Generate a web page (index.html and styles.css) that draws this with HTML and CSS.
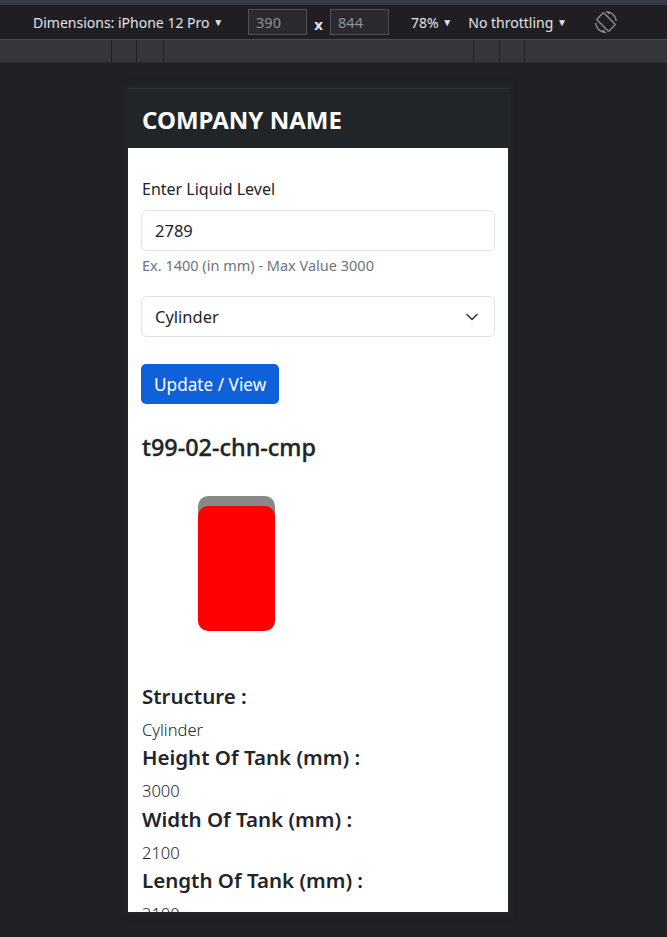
FILE: index.html
```html
<!DOCTYPE html>
<html lang="en">
<head>
<meta charset="utf-8">
<title>Tank Level</title>
<link rel="stylesheet" href="styles.css">
</head>
<body>
<div class="top-strip"></div>
<div class="toolbar">
  <span class="tb-item tb-dim">Dimensions: iPhone 12 Pro <span class="caret">&#9660;</span></span>
  <span class="tb-box">390</span>
  <span class="tb-x">x</span>
  <span class="tb-box">844</span>
  <span class="tb-item tb-zoom">78% <span class="caret">&#9660;</span></span>
  <span class="tb-item tb-throttle">No throttling <span class="caret">&#9660;</span></span>
  <svg class="tb-rotate" width="22" height="22" viewBox="0 0 24 24" aria-hidden="true">
    <path fill="#8a8d93" d="M16.48 2.52c3.27 1.55 5.61 4.72 5.97 8.48h1.5C23.44 4.84 18.29 0 12 0l-.66.03 3.81 3.81 1.33-1.32zm-6.25-.77c-.59-.59-1.54-.59-2.120 0L1.75 8.11c-.59.59-.59 1.54 0 2.12l12.02 12.020c.59.59 1.54.59 2.12 0l6.36-6.36c.59-.59.59-1.54 0-2.12L10.23 1.75zm4.6 19.44L2.81 9.170l6.36-6.36 12.02 12.02-6.36 6.36zm-7.31.29C4.25 19.94 1.91 16.76 1.55 13H.05C.56 19.16 5.71 24 12 24l.66-.03-3.81-3.81-1.33 1.32z"/>
  </svg>
</div>
<div class="ruler">
  <span class="seg s1"></span><span class="seg s2"></span><span class="seg s3"></span><span class="seg s4"></span><span class="seg s5"></span><span class="seg s6"></span><span class="seg s7"></span>
</div>

<main class="device">
  <header class="navbar">COMPANY NAME</header>
  <section class="content">
    <label class="form-label" for="level">Enter Liquid Level</label>
    <div class="form-control" id="level">2789</div>
    <div class="form-text">Ex. 1400 (in mm) - Max Value 3000</div>
    <div class="form-select">
      <span>Cylinder</span>
      <svg class="chev" width="12" height="8" viewBox="0 0 12 8" aria-hidden="true"><path d="M1 1.5 L6 6.5 L11 1.5" fill="none" stroke="#343a40" stroke-width="1.6" stroke-linecap="round" stroke-linejoin="round"/></svg>
    </div>
    <button class="btn">Update / View</button>
    <h2 class="tank-name">t99-02-chn-cmp</h2>
    <div class="tank-wrap">
      <div class="tank"><div class="liquid" style="height:125px"></div></div>
    </div>
    <dl class="specs">
      <dt>Structure :</dt>
      <dd>Cylinder</dd>
      <dt>Height Of Tank (mm) :</dt>
      <dd>3000</dd>
      <dt>Width Of Tank (mm) :</dt>
      <dd>2100</dd>
      <dt>Length Of Tank (mm) :</dt>
      <dd>2100</dd>
    </dl>
  </section>
</main>
</body>
</html>
```

FILE: styles.css
```css
html, body {
  margin: 0;
  padding: 0;
}
body {
  background: #202124;
  font-family: "Noto Sans", "Open Sans", sans-serif;
  height: 937px;
  overflow: hidden;
}
.top-strip {
  height: 5px;
  background: #373946;
}
.toolbar {
  height: 34px;
  background: #1f1f23;
  border-bottom: 1px solid #4a4b50;
  display: flex;
  align-items: center;
  color: #e3e3e6;
  font-size: 14px;
  font-family: "Noto Sans", sans-serif;
}
.caret {
  font-size: 10px;
  position: relative;
  top: -2px;
}
.tb-dim { margin-left: 33px; }
.tb-box {
  box-sizing: border-box;
  width: 59px;
  height: 26px;
  margin-left: 25px;
  background: #2b2b2f;
  border: 1px solid #505156;
  color: #8e9095;
  padding-left: 7px;
  line-height: 24px;
  font-size: 14.5px;
}
.tb-x {
  width: 23px;
  text-align: center;
  font-weight: 700;
  font-size: 15px;
  padding-top: 4px;
}
.tb-x + .tb-box { margin-left: 0; }
.tb-zoom { margin-left: 22px; }
.tb-throttle { margin-left: 16px; }
.tb-rotate { margin-left: 28px; }
.ruler {
  height: 22px;
  background: #35363a;
  display: flex;
  border-bottom: 1px solid #2a2b2e;
}
.seg { display: block; height: 100%; }
.seg + .seg { border-left: 1px solid #1f2023; }
.s1 { width: 111px; }
.s2 { width: 24px; }
.s3 { width: 26px; }
.s4 { width: 309px; }
.s5 { width: 25px; }
.s6 { width: 24px; }
.s7 { flex: 1; }

.device {
  width: 380px;
  height: 824px;
  margin: 25px 0 0 128px;
  background: #fff;
  overflow: hidden;
  box-shadow: 0 0 6px 2px rgba(40, 42, 48, 0.8);
  font-family: "Noto Sans", sans-serif;
  color: #212529;
}
.navbar {
  height: 60px;
  background: #212529;
  color: #fff;
  font-weight: 700;
  font-size: 24px;
  line-height: 61px;
  padding-left: 14px;
  border-top: 1px solid #2c3035;
  box-sizing: border-box;
}
.content {
  padding: 29px 13px 0 13px;
}
.form-label {
  display: block;
  font-size: 16px;
  line-height: 24px;
  margin: 0 0 9px 1px;
}
.form-control, .form-select {
  box-sizing: border-box;
  height: 41px;
  border: 1px solid #dee2e6;
  border-radius: 6px;
  padding: 0 13px;
  font-size: 16.5px;
  line-height: 39px;
}
.form-text {
  font-size: 14.5px;
  line-height: 21px;
  color: #6c757d;
  margin: 4px 0 0 1px;
}
.form-select {
  margin-top: 20px;
  display: flex;
  align-items: center;
  justify-content: space-between;
}
.chev { margin-right: 3px; }
.btn {
  display: block;
  margin-top: 27px;
  height: 40px;
  padding: 0 13px;
  background: #0e61d8;
  color: #fff;
  border: none;
  border-radius: 5px;
  font-family: "Noto Sans", sans-serif;
  font-size: 17.2px;
}
.tank-name {
  margin: 29px 0 0 1px;
  font-size: 23.4px;
  font-weight: 500;
  line-height: 29px;
  -webkit-text-stroke: 0.35px #212529;
}
.tank-wrap {
  padding: 34px 0 0 57px;
}
.tank {
  width: 77px;
  height: 135px;
  background: #888;
  border-radius: 10px;
  display: flex;
  flex-direction: column;
  justify-content: flex-end;
  overflow: hidden;
}
.liquid {
  background: #ff0000;
  border-radius: 10px;
}
.specs {
  margin: 51px 0 0 1px;
}
.specs dt {
  font-size: 20.5px;
  font-weight: 600;
  line-height: 28px;
  margin-bottom: 6px;
}
.specs dd {
  margin: 0;
  font-size: 16.5px;
  line-height: 27.3px;
  font-weight: 300;
}
```
